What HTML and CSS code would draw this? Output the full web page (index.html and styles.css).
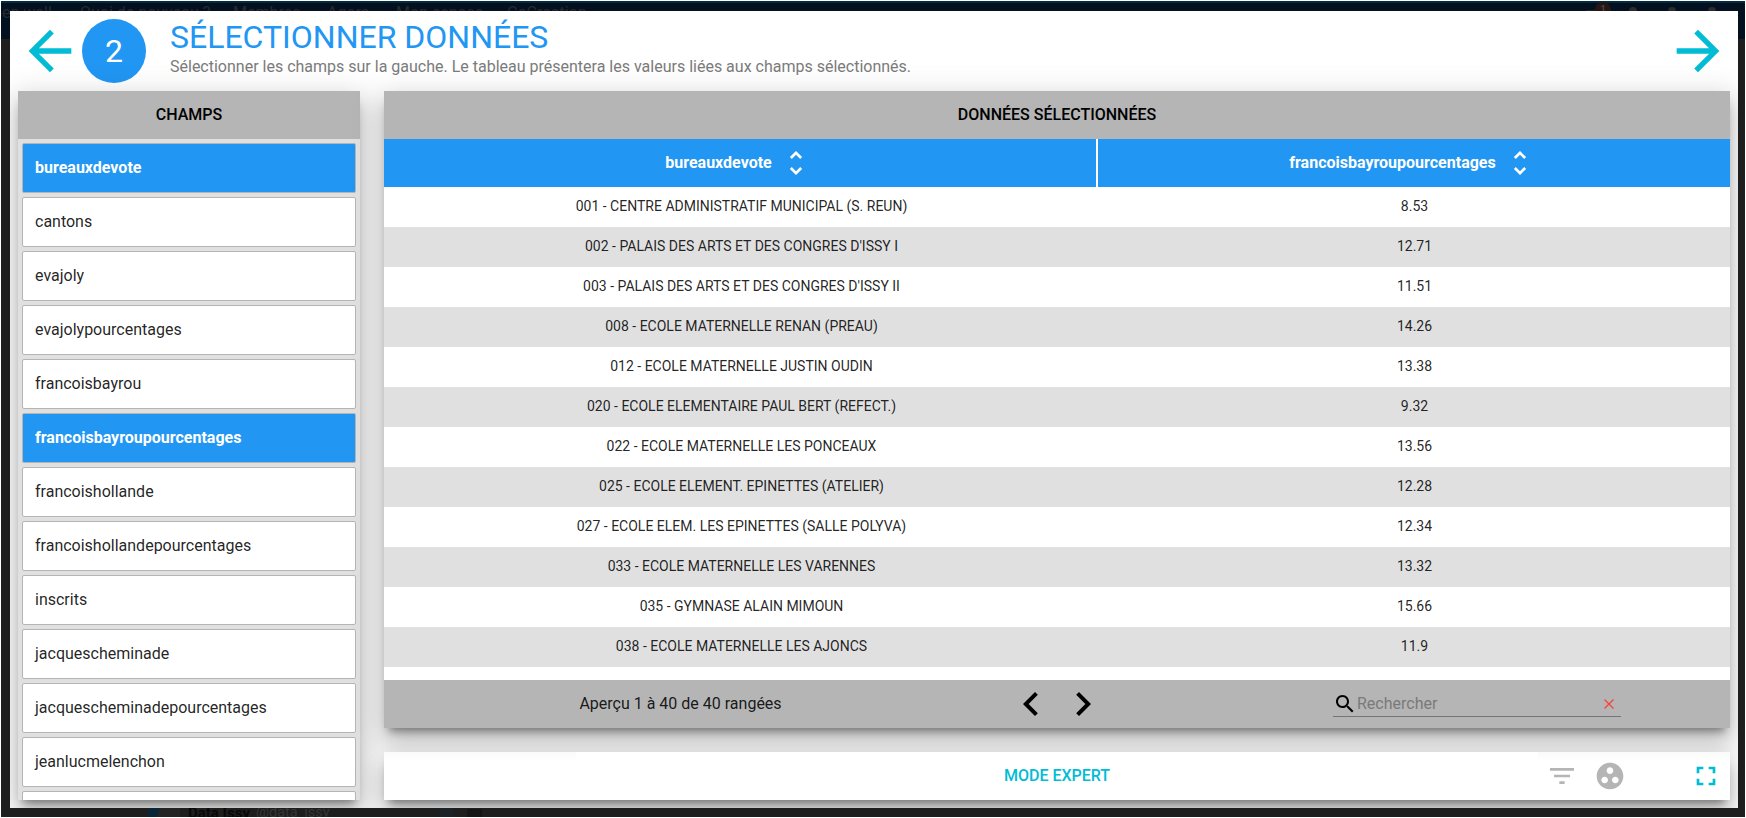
FILE: index.html
```html
<!DOCTYPE html>
<html lang="fr">
<head>
<meta charset="utf-8">
<title>Sélectionner données</title>
<link rel="stylesheet" href="styles.css">
</head>
<body>
<div class="backdrop">
  <nav class="site-nav">
    <span class="nav-1">Open wall</span><span class="nav-2">Quoi de nouveau ?</span><span class="nav-3">Membres</span><span class="nav-4">Agora</span><span class="nav-5">Mon espace</span><span class="nav-6">CoCreation</span>
    <i class="nav-dash"></i><b class="nav-badge">1</b><i class="nav-dot dot-1"></i><i class="nav-dot dot-2"></i><i class="nav-dot dot-3"></i>
  </nav>
  <div class="tweet"><i class="tweet-logo"></i><b>Data Issy</b><span>@data_issy</span><i class="tweet-bird"></i><i class="tweet-box"></i></div>
  <main class="dialog">
    <header class="top">
      <svg class="arrow" viewBox="0 0 24 24"><path d="M20 11H7.83l5.59-5.59L12 4l-8 8 8 8 1.41-1.41L7.83 13H20v-2z"/></svg>
      <div class="step">2</div>
      <div class="titles"><h1>SÉLECTIONNER DONNÉES</h1><p>Sélectionner les champs sur la gauche. Le tableau présentera les valeurs liées aux champs sélectionnés.</p></div>
      <svg class="arrow" viewBox="0 0 24 24"><path d="M12 4l-1.41 1.41L16.17 11H4v2h12.17l-5.58 5.59L12 20l8-8z"/></svg>
    </header>
    <div class="content">
      <section class="fields panel">
        <h2>CHAMPS</h2>
        <ul>
          <li class="on">bureauxdevote</li><li>cantons</li><li>evajoly</li><li>evajolypourcentages</li><li>francoisbayrou</li><li class="on">francoisbayroupourcentages</li><li>francoishollande</li><li>francoishollandepourcentages</li><li>inscrits</li><li>jacquescheminade</li><li>jacquescheminadepourcentages</li><li>jeanlucmelenchon</li><li></li>
        </ul>
      </section>
      <div class="right">
        <section class="data panel">
          <h2>DONNÉES SÉLECTIONNÉES</h2>
          <div class="cols">
            <div>bureauxdevote<svg viewBox="0 0 24 24"><path d="M12 5.830L15.170 9l1.410-1.410L12 3 7.410 7.590 8.830 9 12 5.830zm0 12.340L8.830 15l-1.410 1.410L12 21l4.590-4.590L15.170 15 12 18.170z"/></svg></div>
            <div>francoisbayroupourcentages<svg viewBox="0 0 24 24"><path d="M12 5.830L15.170 9l1.410-1.410L12 3 7.410 7.590 8.830 9 12 5.830zm0 12.340L8.830 15l-1.410 1.410L12 21l4.590-4.590L15.170 15 12 18.170z"/></svg></div>
          </div>
          <div class="rows">
            <div class="row"><span>001 - CENTRE ADMINISTRATIF MUNICIPAL (S. REUN)</span><span>8.53</span></div>
            <div class="row"><span>002 - PALAIS DES ARTS ET DES CONGRES D'ISSY I</span><span>12.71</span></div>
            <div class="row"><span>003 - PALAIS DES ARTS ET DES CONGRES D'ISSY II</span><span>11.51</span></div>
            <div class="row"><span>008 - ECOLE MATERNELLE RENAN (PREAU)</span><span>14.26</span></div>
            <div class="row"><span>012 - ECOLE MATERNELLE JUSTIN OUDIN</span><span>13.38</span></div>
            <div class="row"><span>020 - ECOLE ELEMENTAIRE PAUL BERT (REFECT.)</span><span>9.32</span></div>
            <div class="row"><span>022 - ECOLE MATERNELLE LES PONCEAUX</span><span>13.56</span></div>
            <div class="row"><span>025 - ECOLE ELEMENT. EPINETTES (ATELIER)</span><span>12.28</span></div>
            <div class="row"><span>027 - ECOLE ELEM. LES EPINETTES (SALLE POLYVA)</span><span>12.34</span></div>
            <div class="row"><span>033 - ECOLE MATERNELLE LES VARENNES</span><span>13.32</span></div>
            <div class="row"><span>035 - GYMNASE ALAIN MIMOUN</span><span>15.66</span></div>
            <div class="row"><span>038 - ECOLE MATERNELLE LES AJONCS</span><span>11.9</span></div>
          </div>
          <footer class="pager">
            <div class="count">Aperçu 1 à 40 de 40 rangées</div>
            <div class="pages">
              <svg viewBox="0 0 24 24"><path d="M15.410 7.410L14 6l-6 6 6 6 1.410-1.410L10.830 12z"/></svg>
              <svg viewBox="0 0 24 24"><path d="M10 6L8.590 7.410 13.170 12l-4.580 4.590L10 18l6-6z"/></svg>
            </div>
            <div class="search">
              <svg class="lens" viewBox="0 0 24 24"><path d="M15.500 14h-.790l-.280-.270C15.410 12.590 16 11.110 16 9.500 16 5.910 13.090 3 9.500 3S3 5.910 3 9.500 5.910 16 9.500 16c1.610 0 3.090-.590 4.230-1.570l.270.280v.790l5 4.990L20.490 19l-4.990-5zm-6 0C7.010 14 5 11.990 5 9.500S7.010 5 9.500 5 14 7.010 14 9.500 11.990 14 9.500 14z"/></svg>
              <span>Rechercher</span>
              <svg class="clear" viewBox="0 0 10 10"><path d="M.5.5l9 9M9.500.5l-9 9"/></svg>
            </div>
          </footer>
        </section>
        <section class="bar panel">
          <div class="bar-side"></div>
          <div class="expert">MODE EXPERT</div>
          <div class="bar-side tools">
            <svg class="filter" viewBox="0 0 24 24"><path d="M10 18h4v-2h-4v2zM3 6v2h18V6H3zm3 7h12v-2H6v2z"/></svg>
            <svg class="group" viewBox="0 0 24 24"><path d="M12 2C6.480 2 2 6.480 2 12s4.480 10 10 10 10-4.480 10-10S17.520 2 12 2zM8 17.500c-1.380 0-2.500-1.120-2.500-2.500s1.120-2.500 2.500-2.500 2.500 1.120 2.500 2.500-1.120 2.500-2.500 2.500zM9.500 8c0-1.380 1.120-2.500 2.500-2.500s2.500 1.120 2.500 2.500-1.120 2.500-2.500 2.500S9.500 9.380 9.500 8zm6.500 9.500c-1.380 0-2.500-1.120-2.500-2.500s1.120-2.500 2.500-2.500 2.500 1.120 2.500 2.500-1.120 2.500-2.500 2.500z"/></svg>
            <svg class="full" viewBox="0 0 24 24"><path d="M7 14H5v5h5v-2H7v-3zm-2-4h2V7h3V5H5v5zm12 7h-3v2h5v-5h-2v3zM14 5v2h3v3h2V5h-5z"/></svg>
          </div>
        </section>
      </div>
    </div>
  </main>
</div>
</body>
</html>
```
FILE: styles.css
```css
* { box-sizing: border-box; }
body { margin: 0; padding: 1px; height: 818px; background: #fff; font-family: Roboto, "Liberation Sans", sans-serif; color: rgba(0,0,0,.87); overflow: hidden; }
h1, h2, p, ul { margin: 0; padding: 0; font-weight: 400; }
svg { display: block; flex: none; }

.backdrop { position: relative; height: 816px; padding: 10px 7px 9px 9px; background: #1e1e1e; overflow: hidden; }
.site-nav { position: absolute; left: 0; top: 0; width: 100%; height: 38px; background: #03101f; border-top: 2px solid #022b3f; color: #262a2e; font-size: 16px; }
.site-nav span { position: absolute; top: 0; line-height: 19px; white-space: nowrap; }
.nav-1 { left: -19px; } .nav-2 { left: 79px; } .nav-3 { left: 232px; } .nav-4 { left: 326px; } .nav-5 { left: 395px; } .nav-6 { left: 506px; }
.nav-badge { position: absolute; left: 1594px; top: -1px; width: 16px; height: 16px; border-radius: 50%; background: #251615; color: #4a4644; font-size: 9px; line-height: 14px; text-align: center; }
.nav-dash { position: absolute; left: 1585px; top: 7px; width: 10px; height: 3px; background: #262221; }
.nav-dot { position: absolute; top: 4px; width: 8px; height: 8px; border-radius: 50%; background: #2b2b2c; }
.dot-1 { left: 1628px; } .dot-2 { left: 1667px; } .dot-3 { left: 1707px; }
.tweet { position: absolute; left: 147px; top: 802px; height: 20px; display: flex; align-items: center; color: #363636; font-size: 15px; line-height: 18px; }
.tweet b { width: 68px; margin-left: 8px; color: #080808; white-space: nowrap; }
.tweet-logo { width: 32px; height: 20px; background: linear-gradient(110deg, #092638 35%, #242424 36%); }
.tweet span { width: 69px; font-size: 14.500px; }
.tweet-bird { margin-left: 115px; width: 13px; height: 13px; background: #1c2328; }
.tweet-box { margin-left: 14px; width: 15px; height: 9px; background: #151515; }

.dialog { position: relative; height: 797px; padding: 8px; background: #fff; overflow: hidden; }
.top { display: flex; height: 64px; margin-bottom: 8px; }
.arrow { width: 64px; height: 64px; fill: #00bcd4; }
.step { width: 64px; height: 64px; border-radius: 50%; background: #2196f3; color: #fff; font-size: 32px; line-height: 64px; text-align: center; }
.titles { flex: 1; padding-left: 24px; }
.titles h1 { font-size: 32px; line-height: 37px; color: #2196f3; }
.titles p { padding-top: 1px; font-size: 16px; line-height: 20px; color: #7b7b7b; }

.content { display: flex; gap: 24px; height: 709px; }
.panel { box-shadow: 0 8px 9px -5px rgba(0,0,0,.44), 0 15px 22px 2px rgba(0,0,0,.14), 0 6px 28px 5px rgba(0,0,0,.12); }
.panel h2 { height: 48px; background: #b5b5b5; font-size: 16px; line-height: 48px; font-weight: 500; text-align: center; color: #000; }
.fields { width: 342px; }
.fields ul { height: 661px; padding: 4px; list-style: none; background: #e0e0e0; overflow: hidden; }
.fields li { height: 50px; margin-bottom: 4px; padding-left: 12px; border: 1px solid #b5b5b5; border-radius: 2px; background: #fff; font-size: 16px; line-height: 48px; }
.fields .on { background: #2196f3; color: #fff; font-weight: 700; }

.right { flex: 1; display: flex; flex-direction: column; gap: 24px; }
.data { height: 637px; background: #fff; }
.cols { display: flex; height: 48px; background: #2196f3; color: #fff; font-size: 16px; line-height: 46px; font-weight: 700; }
.cols div { display: flex; align-items: center; justify-content: center; width: 714px; border-right: 2px solid #fff; }
.cols div + div { width: 632px; border: 0; }
.cols svg { width: 32px; height: 32px; margin: 0 3px 0 8px; fill: #fff; }
.rows { height: 493px; }
.row { display: flex; height: 40px; font-size: 14px; line-height: 39px; text-align: center; }
.row:nth-child(even) { background: #e0e0e0; }
.row span { width: 714px; padding-left: 1px; }
.row span + span { width: 632px; }
.pager { display: flex; align-items: center; height: 48px; background: #b5b5b5; font-size: 16px; }
.count { width: 592px; padding-left: 1px; line-height: 20px; padding-bottom: 1px; text-align: center; }
.pages { display: flex; justify-content: center; gap: 4px; width: 162px; }
.pages svg { width: 48px; height: 48px; fill: #000; }
.search { display: flex; align-items: center; width: 288px; height: 26px; margin-left: 195px; border-bottom: 1px solid #757575; color: #7a7a7a; }
.lens { width: 24px; height: 24px; fill: #000; }
.search span { flex: 1; }
.clear { width: 10px; height: 10px; margin: 1px 7px 0 0; stroke: #f44336; stroke-width: 1.200; }
.bar { display: flex; height: 48px; background: #fff; }
.bar-side { width: 192px; background: linear-gradient(#fafafa, #fff 9px); }
.expert { flex: 1; color: #00bcd4; font-size: 16px; font-weight: 500; line-height: 48px; text-align: center; }
.tools { display: flex; align-items: center; }
.tools svg { fill: #b5b5b5; }
.filter { width: 32px; height: 32px; margin-left: 8px; }
.group { width: 32px; height: 32px; margin-left: 16px; }
.tools .full { width: 32px; height: 32px; margin-left: 64px; fill: #00bcd4; }
```
